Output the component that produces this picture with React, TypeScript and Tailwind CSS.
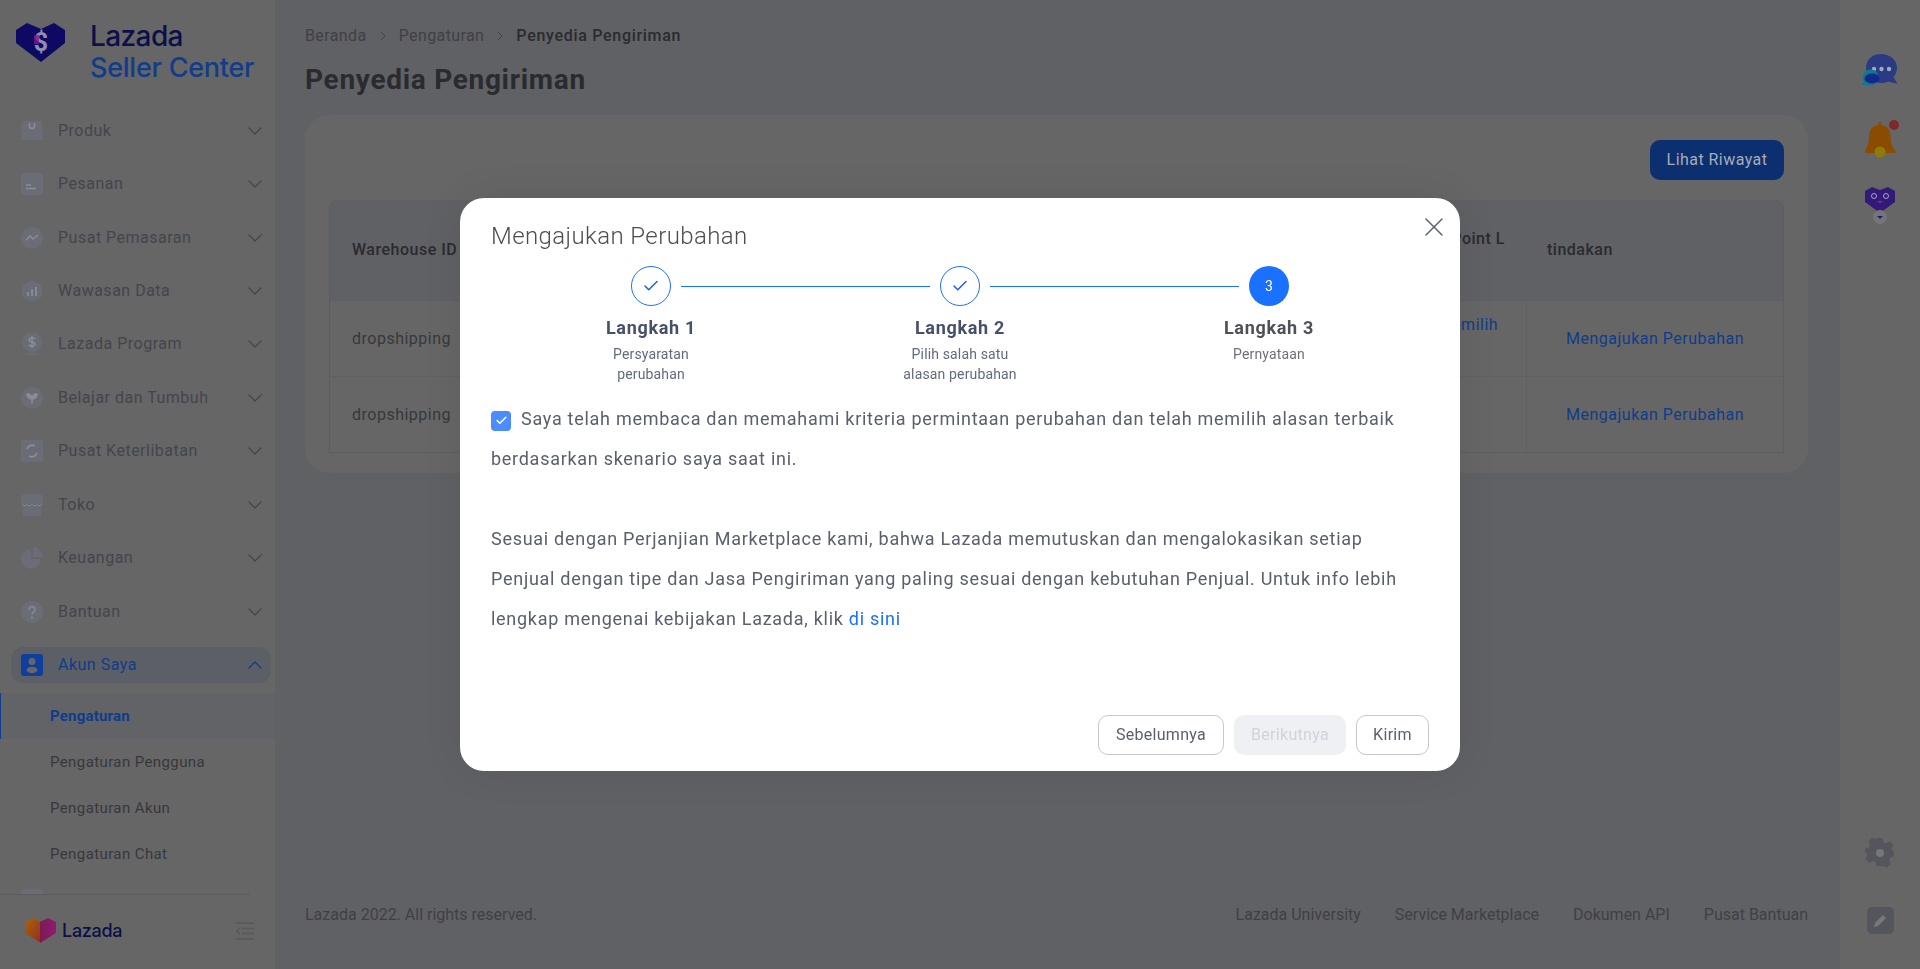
import { ChevronDown, ChevronRight, ChevronUp, Check, X } from "lucide-react";

const iconColor = "#6b6d76";
const glyph = "#8b8d95";

const navIcons: Record<string, React.ReactNode> = {
  bag: (
    <>
      <path d="M3 1h16a2 2 0 0 1 2 2l1 15a2 2 0 0 1-2 2H2a2 2 0 0 1-2-2L1 3a2 2 0 0 1 2-2z" fill={iconColor} />
      <path d="M8.500 3v3a2.500 2.500 0 0 0 5 0V3" stroke={glyph} strokeWidth="1.600" fill="none" />
    </>
  ),
  orders: (
    <>
      <rect width="22" height="22" rx="3" fill={iconColor} />
      <path d="M5 12h5M5 15.500h10" stroke={glyph} strokeWidth="1.600" />
    </>
  ),
  trend: (
    <>
      <circle cx="11" cy="11" r="11" fill={iconColor} />
      <path d="M5 13l4-4 3 3 5-4" stroke={glyph} strokeWidth="1.600" fill="none" />
    </>
  ),
  data: (
    <>
      <path d="M11 0l10 5.500v11L11 22 1 16.500v-11z" fill={iconColor} />
      <path d="M7 16v-4M11 16V9M15 16V7" stroke={glyph} strokeWidth="1.800" />
    </>
  ),
  program: (
    <>
      <circle cx="11" cy="9" r="10" fill={iconColor} />
      <path d="M14 6c-1-1.500-6-1.500-6 1s6 1.500 6 4-5 2.500-6 1M11 3v12" stroke={glyph} strokeWidth="1.400" fill="none" />
      <path d="M11 18v2M4 21.500h14" stroke={iconColor} strokeWidth="2" />
    </>
  ),
  sprout: (
    <>
      <circle cx="11" cy="11" r="11" fill={iconColor} />
      <path d="M11 17v-5M11 12c-3 0-5-1.500-5-5 3 0 5 1.500 5 5zM11 12c3 0 5-1.500 5-5-3 0-5 1.500-5 5z" stroke={glyph} strokeWidth="1.400" fill={glyph} />
    </>
  ),
  cycle: (
    <>
      <rect width="22" height="22" rx="3" fill={iconColor} />
      <path d="M6 9a5.500 5.500 0 0 1 8-3M16 13a5.500 5.500 0 0 1-8 3" stroke={glyph} strokeWidth="1.800" fill="none" />
    </>
  ),
  store: (
    <>
      <path d="M4 0h14a4 4 0 0 1 4 4v6H0V4a4 4 0 0 1 4-4z" fill={iconColor} />
      <path d="M2 12h18v8a2 2 0 0 1-2 2H4a2 2 0 0 1-2-2z" fill={iconColor} />
      <path d="M1 10.500c2.500 1.500 4 1.500 5 0 1.500 1.500 3.500 1.500 5 0 1.500 1.500 3.500 1.500 5 0 1 1.500 2.500 1.500 5 0" stroke={glyph} strokeWidth="1" fill="none" />
    </>
  ),
  pie: (
    <>
      <path d="M10 2a10 10 0 1 0 10 10H10z" fill={iconColor} />
      <path d="M12 0a10 10 0 0 1 10 10H12z" fill={iconColor} />
    </>
  ),
  help: (
    <>
      <circle cx="11" cy="11" r="11" fill={iconColor} />
      <path d="M8 8.500a3 3 0 1 1 4.500 2.600c-1 .6-1.500 1-1.500 2.400" stroke={glyph} strokeWidth="1.500" fill="none" />
      <circle cx="11" cy="16.500" r="1" fill={glyph} />
    </>
  ),
  person: (
    <>
      <rect width="22" height="22" rx="3" fill="#0f3f9c" />
      <circle cx="11" cy="7.500" r="3.500" fill="#666666" />
      <ellipse cx="11" cy="16" rx="5.500" ry="3.200" fill="#666666" />
    </>
  ),
};

const menu = [
  { label: "Produk", icon: "bag" },
  { label: "Pesanan", icon: "orders" },
  { label: "Pusat Pemasaran", icon: "trend" },
  { label: "Wawasan Data", icon: "data" },
  { label: "Lazada Program", icon: "program" },
  { label: "Belajar dan Tumbuh", icon: "sprout" },
  { label: "Pusat Keterlibatan", icon: "cycle" },
  { label: "Toko", icon: "store" },
  { label: "Keuangan", icon: "pie" },
  { label: "Bantuan", icon: "help" },
];

const subMenu = ["Pengaturan Pengguna", "Pengaturan Akun", "Pengaturan Chat"];

const NavIcon = ({ name }: { name: string }) => (
  <svg width="22" height="22" viewBox="0 0 22 22" className="shrink-0">
    {navIcons[name]}
  </svg>
);

const SellerLogo = () => (
  <svg width="49" height="39" viewBox="0 0 49 39" className="shrink-0">
    <path d="M11 0l14 6 13-6 11 7v13L25 39 0 20V7z" fill="#0e0a63" />
    <text x="25" y="28" textAnchor="middle" fontFamily="Roboto, sans-serif" fontWeight="700" fontSize="25" fill="#8f8db0">
      $
    </text>
    <path d="M18 12h5v9h-5z" fill="#8a1188" opacity="0.75" />
  </svg>
);

const LazadaHeart = () => (
  <svg width="31" height="25" viewBox="0 0 31 25" className="shrink-0">
    <defs>
      <linearGradient id="heartLeft" x1="0" y1="0" x2="1" y2="1">
        <stop offset="0" stopColor="#a8650a" />
        <stop offset="1" stopColor="#8f2f1c" />
      </linearGradient>
      <linearGradient id="heartRight" x1="0" y1="0" x2="1" y2="0">
        <stop offset="0" stopColor="#7c1b50" />
        <stop offset="1" stopColor="#8f1a74" />
      </linearGradient>
    </defs>
    <path d="M8 0l8 4v21L0 15V4z" fill="url(#heartLeft)" />
    <path d="M23 0l8 4v11L15 25V4z" fill="url(#heartRight)" />
  </svg>
);

const Sidebar = () => (
  <aside className="flex h-full w-[275px] shrink-0 flex-col bg-[#666666]">
    <div className="flex h-[104px] shrink-0 items-start pl-4 pt-[23px]">
      <SellerLogo />
      <div className="ml-[25px] -mt-[3px] font-['Inter',sans-serif] font-medium">
        <div className="text-[28px] leading-[32px] tracking-[-0.6px] text-[#0b0f4a]">Lazada</div>
        <div className="mt-[1px] text-[27px] leading-[30px] tracking-[-0.25px] text-[#103c8c]">Seller Center</div>
      </div>
    </div>
    <nav className="min-h-0 flex-1 overflow-hidden">
      {menu.map((item) => (
        <div key={item.label} className="flex h-[53.45px] items-center">
          <div className="ml-[11px] flex h-9 w-[260px] items-center rounded-xl px-[10px]">
            <NavIcon name={item.icon} />
            <span className="ml-[15px] flex-1 text-base tracking-[0.5px] text-[#43454d]">{item.label}</span>
            <ChevronDown size={24} strokeWidth={1.3} className="mr-[-6px] text-[#46474d]" />
          </div>
        </div>
      ))}
      <div className="flex h-[53.45px] items-center">
        <div className="ml-[11px] flex h-9 w-[260px] items-center rounded-xl bg-[#5c6066] px-[10px]">
          <NavIcon name="person" />
          <span className="ml-[15px] flex-1 text-base tracking-[0.5px] text-[#103c8c]">Akun Saya</span>
          <ChevronUp size={24} strokeWidth={1.3} className="mr-[-6px] text-[#103c8c]" />
        </div>
      </div>
      <div className="mt-[1px] flex h-[46px] items-center border-l border-[#103c8c] bg-[#616367] pl-[49px] text-[15px] font-bold tracking-[0.2px] text-[#103c8c]">
        Pengaturan
      </div>
      {subMenu.map((label) => (
        <div key={label} className="flex h-[46px] items-center pl-[50px] text-[15px] tracking-[0.4px] text-[#37383c]">
          {label}
        </div>
      ))}
      <div className="pl-[21px] pt-3">
        <div className="h-[22px] w-[22px] rounded-[3px] bg-[#6b6d76]" />
      </div>
    </nav>
    <div className="h-[75px] shrink-0">
      <div className="h-px w-[250px] bg-[#5c5d61]" />
      <div className="flex items-center pl-[25px] pt-[23px]">
        <LazadaHeart />
        <span className="ml-[6px] font-['Inter',sans-serif] text-[18px] font-medium leading-[25px] tracking-[-0.3px] text-[#0b0f4a]">
          Lazada
        </span>
        <svg width="18" height="18" viewBox="0 0 18 18" className="ml-auto mr-[21px]">
          <path d="M0 1h18M6 6.500h12M6 11.500h12M0 17h18M4 6L0.500 9 4 12" stroke="#57585e" strokeWidth="1.500" fill="none" />
        </svg>
      </div>
    </div>
  </aside>
);

const Breadcrumb = () => (
  <div className="flex items-center pt-[25px] text-base leading-[22px] tracking-[0.4px] text-[#3f4046]">
    <span>Beranda</span>
    <ChevronRight size={16} strokeWidth={1.25} className="mx-[8px]" />
    <span>Pengaturan</span>
    <ChevronRight size={16} strokeWidth={1.25} className="mx-[8px]" />
    <span className="font-medium tracking-[0.7px] text-[#2a2b2f]">Penyedia Pengiriman</span>
  </div>
);

const rows = [
  { id: "dropshipping", note: "Silakan memilih" },
  { id: "dropshipping", note: "" },
];

const ProviderTable = () => (
  <div className="mt-5 overflow-hidden rounded-t-lg border-x border-b border-[#5c5d60]">
    <div className="grid h-[100px] grid-cols-[1044px_152px_1fr] bg-[#606164] text-base font-medium tracking-[0.5px] text-[#2a2b2f]">
      <div className="flex items-center pl-[22px]">Warehouse ID</div>
      <div className="pl-[21px] pt-[27px]">Pickup Point L</div>
      <div className="flex items-center pl-[21px]">tindakan</div>
    </div>
    {rows.map((row, i) => (
      <div key={i} className="grid h-[76px] grid-cols-[1044px_152px_1fr] border-t border-[#5f6063] text-base tracking-[0.5px]">
        <div className="flex items-center pl-[22px] text-[#37383c]">{row.id}</div>
        <div className="pl-[4px] pt-[12px] text-[#103c8c]">{row.note}</div>
        <div className="flex items-center justify-center border-l border-[#5f6063] text-[#103c8c]">
          Mengajukan Perubahan
        </div>
      </div>
    ))}
  </div>
);

const Main = () => (
  <main className="flex h-full min-w-0 flex-1 flex-col bg-[#606164] pl-[30px] pr-[32px]">
    <Breadcrumb />
    <h1 className="mt-[12px] text-[28px] font-bold leading-[42px] tracking-[0.7px] text-[#2a2b2f]">Penyedia Pengiriman</h1>
    <section className="mt-[14px] h-[358px] rounded-3xl bg-[#666666] px-6 pt-[25px]">
      <div className="flex justify-end">
        <button className="h-10 w-[134px] rounded-[10px] bg-[#0c2f70] text-base tracking-[0.45px] text-[#a8acb6]">
          Lihat Riwayat
        </button>
      </div>
      <ProviderTable />
    </section>
    <footer className="mb-[27px] mt-auto flex h-[54px] items-center text-base text-[#3f4045]">
      <span className="flex-1">Lazada 2022. All rights reserved.</span>
      <div className="flex gap-[34px]">
        <span>Lazada University</span>
        <span>Service Marketplace</span>
        <span>Dokumen API</span>
        <span>Pusat Bantuan</span>
      </div>
    </footer>
  </main>
);

const RightRail = () => (
  <aside className="flex h-full w-[80px] shrink-0 flex-col items-center bg-[#666666]">
    <svg width="38" height="32" viewBox="0 0 38 32" className="mt-[54px]">
      <path d="M20 0c9.500 0 16 6.500 16 14 0 3.500-1.500 6.500-3.500 9l4 7-9-2.500c-2.500 1-5 1.500-7.500 1.500-9 0-15-7-15-15S11 0 20 0z" fill="#2a3a83" />
      <circle cx="13" cy="15" r="2.200" fill="#a3a8c0" />
      <circle cx="20.500" cy="15" r="2.200" fill="#a3a8c0" />
      <circle cx="28" cy="15" r="2.200" fill="#a3a8c0" />
      <path d="M0 31l3-3a8 8 0 1 1 4 3z" fill="#0e7a90" />
      <ellipse cx="11" cy="24.500" rx="7.500" ry="5" fill="#112a8a" />
    </svg>
    <svg width="34" height="38" viewBox="0 0 34 38" className="ml-[3px] mt-[34px]">
      <path d="M15 0h2l.5 3c6 1 9 5 9 11 0 8 2 12 5 15v2H0v-2c3-3 5-7 5-15 0-6 3-10 9.500-11z" fill="#8a4d00" transform="translate(-1 2)" />
      <circle cx="15" cy="32" r="5.500" fill="#8f7a08" />
      <circle cx="29" cy="5" r="5" fill="#7f2a2a" />
    </svg>
    <svg width="32" height="38" viewBox="0 0 32 38" className="mt-[29px]">
      <path d="M8 0l8 3 8-3 7 4v11L16 26 1 15V4z" fill="#341a78" />
      <circle cx="10" cy="9" r="2.500" stroke="#a7a3c9" fill="none" />
      <circle cx="22" cy="9" r="2.500" stroke="#a7a3c9" fill="none" />
      <path d="M13 14h6l-3 2z" fill="#9b2c86" />
      <circle cx="16" cy="30" r="7" fill="#757575" />
      <path d="M13 29h6l-3 3z" fill="#1d1a80" />
    </svg>
    <svg width="30" height="30" viewBox="0 0 30 30" className="mt-auto">
      <path d="M12 0h6l1 4 3 1.300 3.500-2 4 4.200-2 3.500L29 14l1 1v4l-4 1-1.300 3 2 3.500-4.200 4-3.500-2-1 .5H12l-1-4-3-1.300-3.500 2-4-4.200 2-3.500L1.300 15 0 14v-3l4-1 1.300-3-2-3.500 4.200-4 3.500 2z" fill="#55565d" transform="scale(0.97)" />
      <circle cx="15" cy="15" r="4" fill="#757678" />
    </svg>
    <div className="mb-[35px] mt-[39px] flex h-[27px] w-[27px] items-center justify-center rounded-[5px] bg-[#55565d]">
      <svg width="15" height="15" viewBox="0 0 15 15">
        <path d="M1 14l1-4 8-8 3 3-8 8z" fill="#77787c" />
      </svg>
    </div>
  </aside>
);

const steps = [
  { title: "Langkah 1", desc: ["Persyaratan", "perubahan"] },
  { title: "Langkah 2", desc: ["Pilih salah satu", "alasan perubahan"] },
  { title: "Langkah 3", desc: ["Pernyataan"] },
];

const DoneCircle = () => (
  <div className="flex h-10 w-10 shrink-0 items-center justify-center rounded-full border border-[#1a71ff]">
    <Check size={18} strokeWidth={2} className="text-[#1a5cff]" />
  </div>
);

const Stepper = () => (
  <div className="mt-[13px]">
    <div className="flex items-center justify-center">
      <DoneCircle />
      <div className="mx-[10px] h-px w-[249px] bg-[#1a71ff]" />
      <DoneCircle />
      <div className="mx-[10px] h-px w-[249px] bg-[#1a71ff]" />
      <div className="flex h-10 w-10 shrink-0 items-center justify-center rounded-full bg-[#1a71ff] text-sm text-white">
        3
      </div>
    </div>
    <div className="mt-[8px] flex justify-center">
      {steps.map((step, i) => (
        <div key={step.title} className="w-[309px] text-center">
          <div className={`text-lg font-bold leading-[28px] tracking-[0.7px] ${i === 2 ? "text-[#4f5159]" : "text-[#475069]"}`}>
            {step.title}
          </div>
          <div className={`mt-[2px] text-sm leading-5 tracking-[0.15px] ${i === 2 ? "text-[#6e7179]" : "text-[#626a80]"}`}>
            {step.desc.map((line) => (
              <div key={line}>{line}</div>
            ))}
          </div>
        </div>
      ))}
    </div>
  </div>
);

const ChangeModal = () => (
  <div className="fixed inset-0 flex items-center justify-center">
    <div className="relative h-[573px] w-[1000px] rounded-3xl bg-white px-[31px] pt-[21px] shadow-[0_0_40px_rgba(0,0,0,0.08)]">
      <h2 className="text-2xl font-light leading-[34px] tracking-[0.4px] text-[#4b4d55]">Mengajukan Perubahan</h2>
      <X size={32} strokeWidth={1} className="absolute right-[10px] top-[13px] text-[#595f6d]" />
      <Stepper />
      <div className="mt-[15px] text-[18px] leading-[40px] tracking-[0.72px] text-[#595f6d]">
        <p>
          <span className="mr-[10px] inline-flex h-5 w-5 translate-y-[2px] items-center justify-center rounded-[4px] bg-[#4d8cff]">
            <Check size={13} strokeWidth={3} className="text-white" />
          </span>
          Saya telah membaca dan memahami kriteria permintaan perubahan dan telah memilih alasan terbaik berdasarkan
          skenario saya saat ini.
        </p>
        <p className="mt-10">
          Sesuai dengan Perjanjian Marketplace kami, bahwa Lazada memutuskan dan mengalokasikan setiap Penjual dengan
          tipe dan Jasa Pengiriman yang paling sesuai dengan kebutuhan Penjual. Untuk info lebih lengkap mengenai
          kebijakan Lazada, klik <span className="text-[#1a71ff]">di sini</span>
        </p>
      </div>
      <div className="absolute bottom-[16px] right-[31px] flex gap-[10px] text-base tracking-[0.3px]">
        <button className="h-10 w-[126px] rounded-[10px] border border-[#c5c7d2] text-[#595f6d]">Sebelumnya</button>
        <button className="h-10 w-[112px] rounded-[10px] bg-[#eff0f4] text-[#d0d3dc]">Berikutnya</button>
        <button className="h-10 w-[73px] rounded-[10px] border border-[#c5c7d2] text-[#595f6d]">Kirim</button>
      </div>
    </div>
  </div>
);

export default function App() {
  return (
    <div className="flex h-screen w-full overflow-hidden font-['Roboto',sans-serif]">
      <Sidebar />
      <Main />
      <RightRail />
      <ChangeModal />
    </div>
  );
}
